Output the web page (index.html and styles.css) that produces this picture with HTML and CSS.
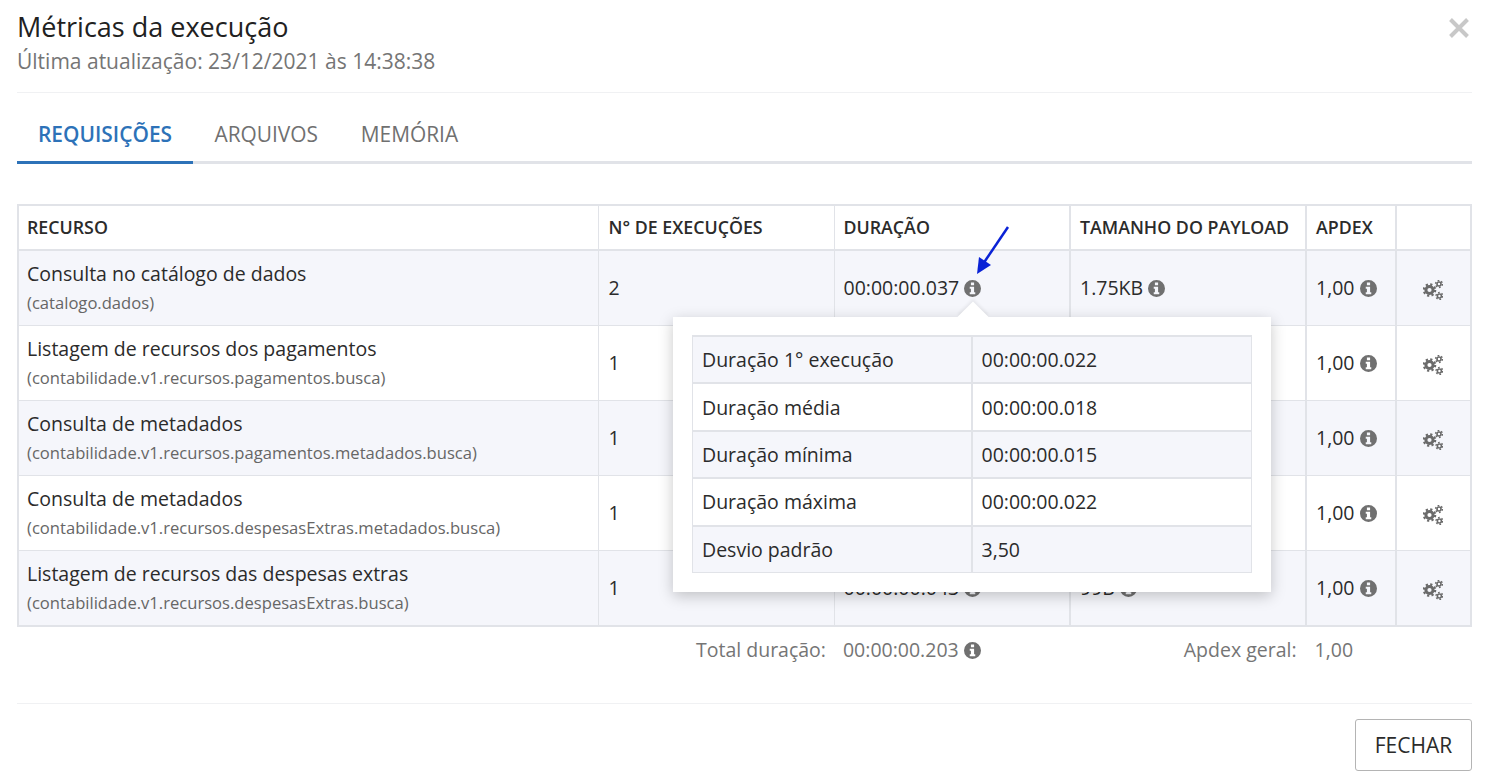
FILE: index.html
```html
<!DOCTYPE html>
<html lang="pt-BR">
<head>
    <meta charset="UTF-8">
    <title>Métricas da execução</title>
    <link rel="stylesheet" href="styles.css">
</head>
<body>
    <svg class="icon-defs" width="0" height="0">
        <symbol id="icon-info" viewBox="0 0 16 16">
            <path fill-rule="evenodd" d="M8 0a8 8 0 1 1 0 16A8 8 0 0 1 8 0zM6.5 2.4v2.5h3V2.4zM5.4 6.4v1.9h1.1v3.2H5.4v2h5.2v-2H9.5V6.4z"/>
        </symbol>
        <symbol id="icon-cogs" viewBox="0 0 20 20">
            <g fill="none">
                <circle cx="6.5" cy="10" r="3.6" stroke-width="3"/>
                <circle cx="6.5" cy="10" r="5.7" stroke-width="2.2" stroke-dasharray="2.2 2.28"/>
                <circle cx="16" cy="4" r="2" stroke-width="1.6"/>
                <circle cx="16" cy="4" r="3.4" stroke-width="1.5" stroke-dasharray="1.7 1.86"/>
                <circle cx="16.4" cy="16" r="2" stroke-width="1.6"/>
                <circle cx="16.4" cy="16" r="3.4" stroke-width="1.5" stroke-dasharray="1.7 1.86"/>
            </g>
        </symbol>
    </svg>

    <div class="modal">
        <header class="modal-header">
            <div>
                <h1>Métricas da execução</h1>
                <p class="updated">Última atualização: 23/12/2021 às 14:38:38</p>
            </div>
            <svg class="close" width="22" height="22" viewBox="0 0 22 22"><path d="M2.5 2.5l17 17M19.5 2.5l-17 17"/></svg>
        </header>

        <nav class="tabs">
            <a class="tab active">REQUISIÇÕES</a>
            <a class="tab">ARQUIVOS</a>
            <a class="tab">MEMÓRIA</a>
        </nav>

        <table class="metrics">
            <colgroup>
                <col class="col-resource"><col class="col-runs"><col class="col-duration"><col class="col-payload"><col class="col-apdex"><col>
            </colgroup>
            <thead>
                <tr><th>RECURSO</th><th>N° DE EXECUÇÕES</th><th>DURAÇÃO</th><th>TAMANHO DO PAYLOAD</th><th>APDEX</th><th></th></tr>
            </thead>
            <tbody>
                <tr>
                    <td><div class="name">Consulta no catálogo de dados</div><div class="path">(catalogo.dados)</div></td>
                    <td>2</td>
                    <td>00:00:00.037 <svg class="info"><use href="#icon-info"/></svg></td>
                    <td>1.75KB <svg class="info"><use href="#icon-info"/></svg></td>
                    <td>1,00 <svg class="info"><use href="#icon-info"/></svg></td>
                    <td class="cog-cell"><svg class="cogs"><use href="#icon-cogs"/></svg></td>
                </tr>
                <tr>
                    <td><div class="name">Listagem de recursos dos pagamentos</div><div class="path">(contabilidade.v1.recursos.pagamentos.busca)</div></td>
                    <td>1</td>
                    <td></td>
                    <td></td>
                    <td>1,00 <svg class="info"><use href="#icon-info"/></svg></td>
                    <td class="cog-cell"><svg class="cogs"><use href="#icon-cogs"/></svg></td>
                </tr>
                <tr>
                    <td><div class="name">Consulta de metadados</div><div class="path">(contabilidade.v1.recursos.pagamentos.metadados.busca)</div></td>
                    <td>1</td>
                    <td></td>
                    <td></td>
                    <td>1,00 <svg class="info"><use href="#icon-info"/></svg></td>
                    <td class="cog-cell"><svg class="cogs"><use href="#icon-cogs"/></svg></td>
                </tr>
                <tr>
                    <td><div class="name">Consulta de metadados</div><div class="path">(contabilidade.v1.recursos.despesasExtras.metadados.busca)</div></td>
                    <td>1</td>
                    <td></td>
                    <td></td>
                    <td>1,00 <svg class="info"><use href="#icon-info"/></svg></td>
                    <td class="cog-cell"><svg class="cogs"><use href="#icon-cogs"/></svg></td>
                </tr>
                <tr class="last-row">
                    <td><div class="name">Listagem de recursos das despesas extras</div><div class="path">(contabilidade.v1.recursos.despesasExtras.busca)</div></td>
                    <td>1</td>
                    <td>00:00:00.043 <svg class="info"><use href="#icon-info"/></svg></td>
                    <td>99B <svg class="info"><use href="#icon-info"/></svg></td>
                    <td>1,00 <svg class="info"><use href="#icon-info"/></svg></td>
                    <td class="cog-cell"><svg class="cogs"><use href="#icon-cogs"/></svg></td>
                </tr>
            </tbody>
        </table>

        <div class="totals">
            <span class="total-label">Total duração:</span>
            <span class="total-value">00:00:00.203 <svg class="info"><use href="#icon-info"/></svg></span>
            <span class="apdex-label">Apdex geral:</span>
            <span class="apdex-value">1,00</span>
        </div>

        <footer class="modal-footer">
            <button type="button">FECHAR</button>
        </footer>
    </div>

    <!-- popover over the table -->
    <div class="popover">
        <table>
            <tr><td>Duração 1° execução</td><td>00:00:00.022</td></tr>
            <tr><td>Duração média</td><td>00:00:00.018</td></tr>
            <tr><td>Duração mínima</td><td>00:00:00.015</td></tr>
            <tr><td>Duração máxima</td><td>00:00:00.022</td></tr>
            <tr><td>Desvio padrão</td><td>3,50</td></tr>
        </table>
    </div>

    <svg class="annotation" width="40" height="52" viewBox="0 0 40 52">
        <path class="arrow-line" d="M36 2L11 39"/>
        <path class="arrow-head" d="M5 49L7 32L19 40z"/>
    </svg>
</body>
</html>
```

FILE: styles.css
```css
* {
    box-sizing: border-box;
}

html, body {
    height: 776px;
    overflow: hidden;
}

body {
    margin: 0;
    background-color: #ffffff;
    color: #2b2b2b;
    font-family: "Open Sans", sans-serif;
    font-size: 19.5px;
    position: relative;
}

.icon-defs {
    position: absolute;
}

.modal {
    padding: 0 16px 0 17px;
}

.modal-header {
    display: flex;
    justify-content: space-between;
    height: 93px;
    padding-top: 9px;
    border-bottom: 1px solid #f0f1f3;
}

h1 {
    margin: 0;
    font-size: 27px;
    font-weight: 400;
    line-height: 36px;
    color: #212121;
}

.updated {
    margin: 0;
    font-size: 21px;
    line-height: 32px;
    color: #757575;
}

.close {
    margin: 8px 2px 0 0;
}

.close path {
    fill: none;
    stroke: #c8c8c8;
    stroke-width: 4;
}

.tabs {
    display: flex;
    height: 71px;
    border-bottom: 3px solid #e1e3e8;
}

.tab {
    height: 71px;
    padding: 0 21.4px;
    font-size: 20.9px;
    line-height: 82px;
    color: #707070;
}

.tab.active {
    padding: 0 21px;
    font-weight: 600;
    color: #2d72b8;
    border-bottom: 3px solid #2d72b8;
}

.metrics {
    width: 1455px;
    margin-top: 40px;
    border-collapse: collapse;
    table-layout: fixed;
    border: 2px solid #e1e3e8;
}

.col-resource { width: 580px; }
.col-runs { width: 236px; }
.col-duration { width: 236px; }
.col-payload { width: 236px; }
.col-apdex { width: 90px; }

.metrics th {
    height: 45px;
    padding: 0 0 2px 9px;
    text-align: left;
    font-size: 17.8px;
    font-weight: 600;
    color: #2b2b2b;
    border: 2px solid #e1e3e8;
}

.metrics td {
    height: 75px;
    padding: 0 9px;
    border: 1px solid #e1e3e8;
    border-width: 1px 2px;
}

/* the first columns have thinner dividers */
.metrics th:nth-child(-n+2),
.metrics td:nth-child(-n+2) {
    border-right-width: 1px;
}

.metrics th:nth-child(2),
.metrics td:nth-child(2),
.metrics th:nth-child(3),
.metrics td:nth-child(3) {
    border-left-width: 1px;
}

.metrics th:first-child,
.metrics td:first-child {
    padding-left: 8px;
}

.metrics th:nth-child(2),
.metrics td:nth-child(2) {
    padding-left: 10px;
}

.metrics .last-row td {
    height: 76px;
}

.metrics tbody tr:nth-child(odd) {
    background-color: #f5f6fb;
}

.metrics td:first-child {
    border-left-width: 1px;
}

.name {
    line-height: 26px;
    margin-top: -2px;
}

.path {
    margin-top: 6px;
    font-size: 16.6px;
    line-height: 20px;
    color: #666666;
}

.info {
    width: 17px;
    height: 17px;
    vertical-align: -2px;
    fill: #707070;
}

.metrics .cog-cell {
    padding-right: 11px;
    text-align: center;
}

.cogs {
    width: 20px;
    height: 20px;
    vertical-align: middle;
    stroke: #6a6a6a;
}

.totals {
    display: flex;
    align-items: center;
    height: 45px;
    color: #757575;
}

.total-label { margin-left: 679px; }
.total-value { margin-left: 17px; }
.apdex-label { margin-left: 203px; }
.apdex-value { margin-left: 18px; }

.modal-footer {
    display: flex;
    justify-content: flex-end;
    margin-top: 31px;
    padding-top: 15px;
    border-top: 1px solid #f0f1f3;
}

button {
    width: 117px;
    height: 52px;
    background-color: #ffffff;
    border: 1px solid #b4b4b4;
    border-radius: 3px;
    color: #2b2b2b;
    font-family: inherit;
    font-size: 21px;
}

.popover {
    position: absolute;
    left: 673px;
    top: 317px;
    width: 598px;
    height: 275px;
    padding: 18px 19px;
    background-color: #ffffff;
    box-shadow: 0 4px 14px rgba(0, 0, 0, 0.22);
}

.popover::before {
    content: "";
    position: absolute;
    left: 289px;
    top: -11px;
    width: 22px;
    height: 22px;
    background-color: #ffffff;
    transform: rotate(45deg);
    box-shadow: -2px -2px 3px rgba(0, 0, 0, 0.06);
}

.popover table {
    position: relative;
    width: 560px;
    border-collapse: collapse;
    table-layout: fixed;
    background-color: #ffffff;
    border: 1px solid #e1e3e8;
    border-top-width: 2px;
}

.popover td {
    height: 47.4px;
    padding: 0 9px;
    border: 1px solid #e1e3e8;
    border-width: 2px 2px 2px 1px;
}

.popover td:first-child {
    width: 279px;
    border-left-width: 1px;
    border-right-width: 2px;
}

.popover td:last-child {
    border-right-width: 1px;
}

.popover tr:last-child td {
    border-bottom-width: 1px;
}

.popover tr:nth-child(odd) {
    background-color: #f5f6fb;
}

.annotation {
    position: absolute;
    left: 972px;
    top: 225px;
}

.arrow-line {
    fill: none;
    stroke: #0a22d6;
    stroke-width: 2.5;
}

.arrow-head {
    fill: #0a22d6;
}
```
